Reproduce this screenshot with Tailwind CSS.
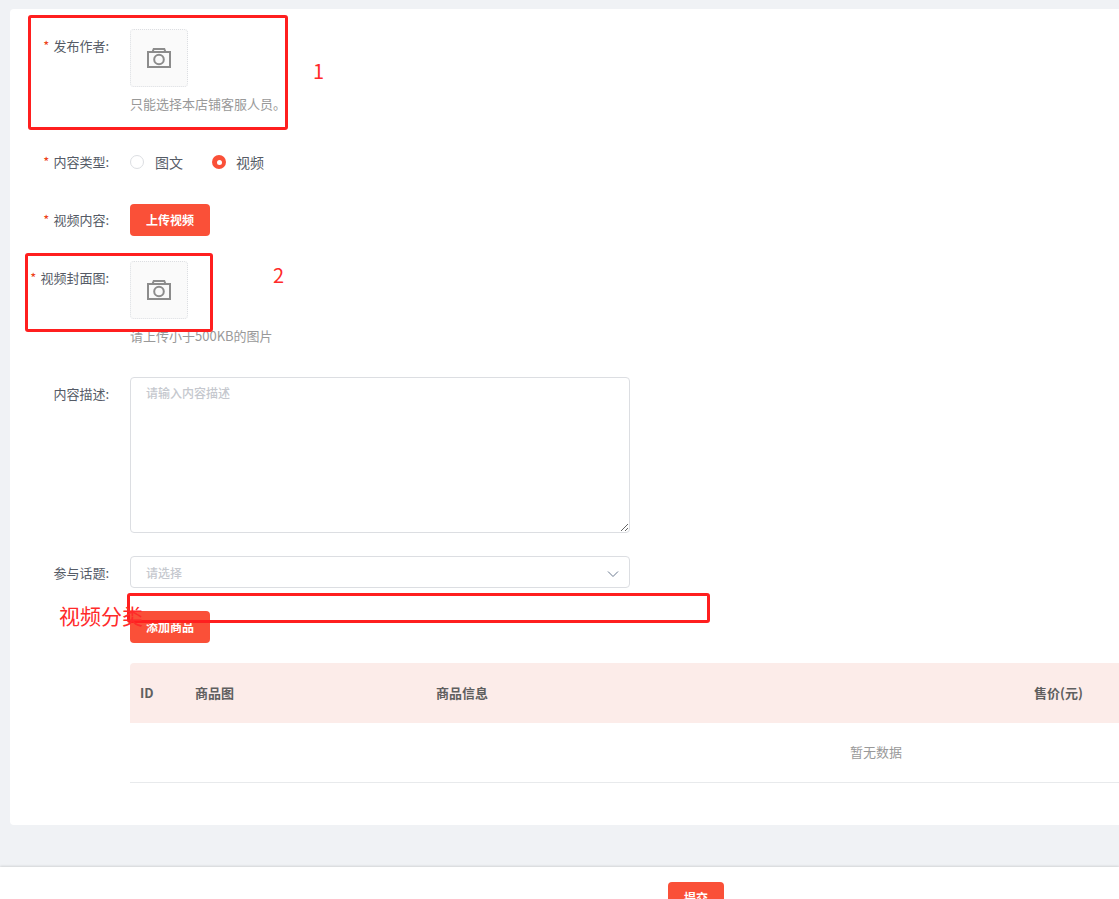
<!DOCTYPE html>
<html lang="zh-CN">
<head>
  <meta charset="UTF-8">
  <meta name="viewport" content="width=device-width, initial-scale=1.0">
  <title>发布内容</title>
  <script src="https://cdn.jsdelivr.net/npm/@tailwindcss/browser@4"></script>
</head>
<body class="relative h-[899px] overflow-hidden bg-[#f0f2f5] font-['Noto_Sans_CJK_SC','Noto_Sans',sans-serif] text-[13px] text-[#555b66]">
  <main class="pt-[9px] pl-[10px]">
    <!-- 表单卡片 -->
    <form class="w-[1700px] rounded-[4px] bg-white pt-[20px] pb-[42px]">
      <!-- 发布作者 -->
      <div class="mb-[30px] flex">
        <label class="w-[120px] pr-[21px] text-right leading-[34px]"><span class="mr-[4px] text-[#ed4014]">*</span>发布作者:</label>
        <div>
          <div class="flex h-[58px] w-[58px] items-center justify-center rounded-[4px] border border-dotted border-[#dcdee2] bg-[#fafafa]">
            <svg width="26" height="24" viewBox="0 0 26 24" fill="none" stroke="#8c8c8c" stroke-width="2"><path d="M2 6h22v15H2z"/><path d="M6.5 6l1.2-3h10.6l1.2 3"/><circle cx="13" cy="13.5" r="4.8"/></svg>
          </div>
          <p class="mt-[5px] leading-[24px] text-[#999]">只能选择本店铺客服人员。</p>
        </div>
      </div>
      <!-- 内容类型 -->
      <div class="mb-[26px] flex">
        <label class="w-[120px] pr-[21px] text-right leading-[32px]"><span class="mr-[4px] text-[#ed4014]">*</span>内容类型:</label>
        <div class="flex items-center text-[14px] leading-[32px] whitespace-nowrap">
          <span class="h-[14px] w-[14px] rounded-full border border-[#dcdee2] bg-white"></span>
          <span class="ml-[11px]">图文</span>
          <span class="ml-[29px] flex h-[14px] w-[14px] items-center justify-center rounded-full bg-[#fa5038]"><span class="h-[5px] w-[5px] rounded-full bg-white"></span></span>
          <span class="ml-[10px]">视频</span>
        </div>
      </div>
      <!-- 视频内容 -->
      <div class="mb-[25px] flex">
        <label class="w-[120px] pr-[21px] text-right leading-[32px]"><span class="mr-[4px] text-[#ed4014]">*</span>视频内容:</label>
        <button type="button" class="h-[32px] w-[80px] rounded-[4px] bg-[#fa5038] text-[12px] font-bold text-white">上传视频</button>
      </div>
      <!-- 视频封面图 -->
      <div class="mb-[29px] flex">
        <label class="w-[120px] pr-[21px] text-right leading-[34px]"><span class="mr-[4px] text-[#ed4014]">*</span>视频封面图:</label>
        <div>
          <div class="flex h-[58px] w-[58px] items-center justify-center rounded-[4px] border border-dotted border-[#dcdee2] bg-[#fafafa]">
            <svg width="26" height="24" viewBox="0 0 26 24" fill="none" stroke="#8c8c8c" stroke-width="2"><path d="M2 6h22v15H2z"/><path d="M6.5 6l1.2-3h10.6l1.2 3"/><circle cx="13" cy="13.5" r="4.8"/></svg>
          </div>
          <p class="mt-[5px] leading-[24px] text-[#999]">请上传小于500KB的图片</p>
        </div>
      </div>
      <!-- 内容描述 -->
      <div class="mb-[23px] flex">
        <label class="w-[120px] pr-[21px] text-right leading-[34px]">内容描述:</label>
        <textarea placeholder="请输入内容描述" class="h-[156px] w-[500px] rounded-[4px] border border-[#dcdee2] px-[15px] py-[6px] text-[12px] leading-[18px] font-medium placeholder:text-[#c5c8ce]"></textarea>
      </div>
      <!-- 参与话题 -->
      <div class="mb-[23px] flex h-[32px]">
        <label class="w-[120px] pr-[21px] text-right leading-[34px]">参与话题:</label>
        <div class="flex h-[32px] w-[500px] items-center justify-between rounded-[4px] border border-[#dcdee2] pr-[10px] pl-[15px] text-[12px] font-medium text-[#c5c8ce]">
          <span class="mt-[1px]">请选择</span>
          <svg class="mt-[4px]" width="12" height="8" viewBox="0 0 12 8" fill="none" stroke="#6b7a90" stroke-width="1"><path d="M1 1.5l5 5 5-5"/></svg>
        </div>
      </div>
      <!-- 商品 -->
      <div class="flex">
        <div class="w-[120px]"></div>
        <div>
          <button type="button" class="h-[32px] w-[80px] rounded-[4px] bg-[#fa5038] text-[12px] font-bold text-white">添加商品</button>
          <div class="mt-[20px] w-[1492px]">
            <div class="flex h-[60px] items-center rounded-t-[4px] bg-[#fcece9] pl-[10px] font-bold text-[#5f5f5f]">
              <span class="w-[55px]">ID</span>
              <span class="w-[241px]">商品图</span>
              <span class="w-[598px]">商品信息</span>
              <span>售价(元)</span>
            </div>
            <div class="flex h-[60px] items-center justify-center border-b border-[#e8eaec] pb-[2px] text-[#999]">暂无数据</div>
          </div>
        </div>
      </div>
    </form>
  </main>

  <!-- 底部操作栏 -->
  <footer class="mt-[42px] h-[80px] w-full bg-white pt-[15px] shadow-[0_-1px_2px_rgba(0,0,0,0.12)]">
    <div class="flex w-[1392px] justify-center">
      <button type="button" class="h-[32px] w-[56px] rounded-[4px] bg-[#fa5038] text-[12px] font-bold text-white">提交</button>
    </div>
  </footer>

  <!-- 截图上的红色标注 -->
  <div class="absolute top-[15px] left-[28px] h-[115px] w-[260px] rounded-[3px] border-[3px] border-[#ff1f1f]"></div>
  <span class="absolute top-[56px] left-[313px] text-[20px] leading-[30px] text-[#ff2a2a]">1</span>
  <div class="absolute top-[253px] left-[25px] h-[79px] w-[188px] rounded-[3px] border-[3px] border-[#ff1f1f]"></div>
  <span class="absolute top-[260px] left-[273px] text-[20px] leading-[30px] text-[#ff2a2a]">2</span>
  <div class="absolute top-[593px] left-[127px] h-[30px] w-[583px] rounded-[3px] border-[3px] border-[#ff1f1f]"></div>
  <span class="absolute top-[600px] left-[59px] text-[21px] leading-[30px] text-[#ff2a2a]">视频分类</span>
</body>
</html>
